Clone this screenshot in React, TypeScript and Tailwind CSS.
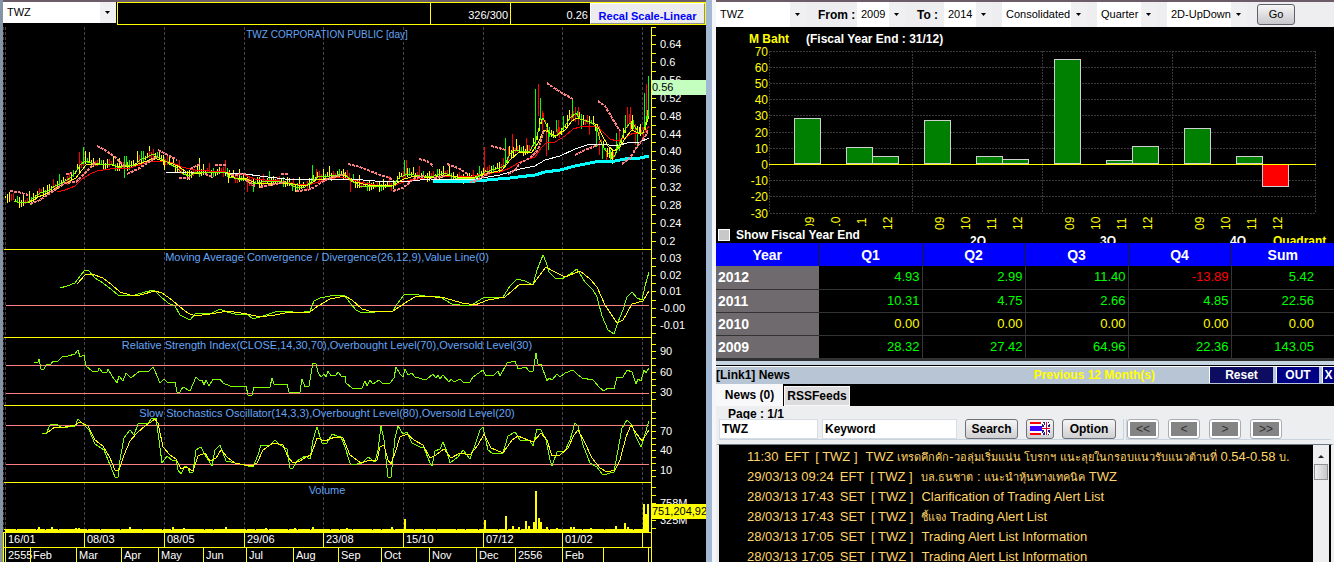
import { ReactNode } from 'react';

const GREEN = '#80ff00';
const YELLOW = '#ffff00';
const PINK = '#ff8080';

const fastLine =
  '14,201 20,203 28,202 35,197 40,193 48,191 55,186 62,183 70,178 76,172 80,165 85,161 92,163 105,165 113,164 118,168 125,166 135,165 140,160 147,157 153,154 158,157 165,161 170,164 177,168 183,174 190,176 196,172 205,172 213,173 225,172 230,177 238,179 245,180 252,184 262,182 275,181 288,183 295,187 305,187 312,181 318,177 330,176 345,174 350,180 360,186 375,187 392,186 400,177 408,174 420,176 430,177 445,173 455,178 465,179 475,178 485,172 500,168 505,165 510,154 515,150 520,151 530,151 536,140 540,124 543,118 546,124 549,133 555,137 560,132 565,126 570,118 576,113 580,119 586,121 592,123 597,128 600,140 605,150 610,155 614,157 618,148 622,138 626,128 630,123 634,125 638,132 642,134 645,128 648,110';
const slowLine =
  '20,202 30,202 38,197 48,193 58,187 68,182 76,178 82,170 86,165 98,164 112,165 118,167 130,166 142,163 154,158 160,160 170,163 178,166 186,172 196,174 205,172 228,173 235,178 245,178 255,183 270,183 288,183 298,185 308,185 316,180 330,178 345,175 354,182 368,185 392,186 404,179 415,176 432,178 445,175 458,177 472,178 486,174 502,170 510,160 518,153 532,152 538,143 544,130 550,133 556,136 565,130 572,121 577,118 590,122 597,125 602,135 608,146 614,151 620,147 626,137 632,130 638,133 643,133 649,116';
const redLine =
  '57,192 65,190 75,186 82,179 90,174 97,171 110,169 130,168 145,163 155,161 165,161 173,163 182,167 195,170 210,171 225,172 235,174 245,175 255,179 265,180 280,181 300,185 312,184 325,180 340,177 350,179 360,182 375,185 395,185 410,180 425,178 445,176 465,177 485,174 500,172 510,168 520,162 535,157 541,148 546,143 555,142 565,136 573,129 580,127 595,126 602,131 610,139 617,141 625,138 633,133 640,134 645,132 649,126';
const whiteLine =
  '165,172 225,173 245,174 260,176 285,179 300,180 330,179 350,179 375,181 400,182 430,179 470,180 500,175 520,169 535,166 545,160 560,156 575,149 590,144 600,144 617,146 630,142 640,142 649,138';
const cyanLine =
  '433,181 475,181 510,178 535,175 545,172 560,170 575,166 595,162 615,161 625,159 640,158 649,156';

const sarRuns = [
  '10,191 18,192 28,195',
  '30,204 40,200 50,193 65,183 76,182 85,173 95,163',
  '66,174 72,173',
  '97,146 105,150 115,157 125,167',
  '127,174 138,169 150,161 157,157',
  '158,150 168,155 177,160',
  '179,178 190,178',
  '190,169 200,164',
  '205,174 213,177',
  '215,165 227,165',
  '231,175 246,174',
  '246,180 255,186',
  '260,187 275,184 285,182',
  '281,174 288,174',
  '296,191 308,190 315,187 325,180 337,176 345,174',
  '348,164 360,167 375,173 392,179',
  '393,191 403,188 415,178 425,176',
  '419,159 427,161 433,166',
  '434,178 446,176',
  '447,164 458,168 468,174',
  '470,182 478,180 490,172',
  '491,146 506,150',
  '508,174 515,170 520,163 530,158 538,150 544,130',
  '547,83 560,92 573,99',
  '575,155 585,150 598,145',
  '598,101 605,106 612,118 620,131',
  '622,164 630,158 638,145 645,137 648,130',
];

// x, top, bottom, colour
const tallBars: [number, number, number, string][] = [
  [80, 152, 166, 'red'], [84, 147, 164, 'lime'], [86, 151, 164, 'yellow'], [125, 156, 178, 'lime'],
  [127, 156, 166, 'lime'], [138, 151, 162, 'yellow'], [142, 151, 160, 'lime'], [150, 151, 158, 'red'],
  [155, 156, 160, 'yellow'], [165, 160, 170, 'yellow'], [200, 158, 172, 'yellow'], [226, 160, 173, 'red'],
  [229, 173, 183, 'yellow'], [248, 178, 192, 'red'], [254, 182, 192, 'lime'], [293, 184, 191, 'lime'],
  [313, 165, 180, 'lime'], [317, 169, 180, 'red'], [351, 178, 192, 'red'], [405, 160, 176, 'lime'],
  [407, 160, 175, 'red'], [485, 147, 174, 'red'], [506, 138, 164, 'lime'], [509, 147, 160, 'red'],
  [513, 134, 151, 'red'], [517, 139, 151, 'yellow'], [527, 138, 151, 'red'], [536, 89, 150, 'lime'],
  [539, 84, 116, 'red'], [541, 98, 120, 'lime'], [543, 111, 130, 'red'], [547, 128, 156, 'red'],
  [549, 133, 150, 'lime'], [557, 120, 132, 'lime'], [559, 120, 133, 'red'], [564, 116, 128, 'lime'],
  [568, 115, 127, 'yellow'], [573, 98, 118, 'lime'], [576, 107, 122, 'red'], [579, 107, 125, 'red'],
  [582, 114, 129, 'lime'], [590, 124, 135, 'red'], [597, 128, 147, 'lime'], [600, 141, 155, 'red'],
  [603, 146, 159, 'lime'], [607, 150, 160, 'red'], [611, 150, 160, 'lime'], [613, 150, 164, 'yellow'],
  [617, 133, 150, 'lime'], [620, 129, 142, 'red'], [626, 115, 128, 'lime'], [628, 107, 124, 'red'],
  [631, 107, 130, 'red'], [633, 115, 130, 'yellow'], [636, 124, 145, 'red'], [638, 130, 147, 'lime'],
  [641, 124, 136, 'yellow'], [645, 93, 130, 'lime'], [647, 84, 120, 'red'], [649, 76, 116, 'lime'],
];

const macdFast =
  '60,288 67,286 75,283 80,276 85,270 89,271 95,278 103,283 112,290 118,295 124,296 135,295 145,292 154,290 160,296 168,303 175,306 180,315 190,320 196,313 210,314 220,309 227,312 235,314 247,314 253,319 263,316 275,312 287,311 298,313 310,311 314,301 320,298 330,296 340,295 345,296 350,303 356,310 362,313 375,312 393,311 397,304 404,295 413,294 425,296 440,297 452,304 460,305 470,306 483,298 503,297 510,286 517,279 525,281 533,285 537,270 543,255 546,262 549,272 555,278 562,279 570,274 577,269 585,282 593,290 597,297 602,316 608,330 614,334 618,322 623,310 627,297 632,292 637,298 642,300 645,286 649,272';
const macdSlow =
  '77,284 85,275 92,274 103,278 112,285 120,292 130,295 140,295 155,291 162,293 172,300 180,307 188,313 195,316 210,314 228,311 247,314 260,317 275,315 290,312 310,312 318,306 330,299 345,296 352,300 362,309 373,312 393,311 405,303 415,297 425,296 445,298 462,303 475,305 488,300 505,297 512,291 520,284 533,284 540,275 546,267 553,271 565,277 580,271 590,279 597,287 605,305 617,323 623,320 632,304 643,301 649,291';
const rsi =
  '34,362 38,362 39,359 41,369 44,369 46,365 51,364 53,361 58,361 62,357 68,356 75,354 78,350 80,357 84,355 86,366 92,371 98,371 99,368 103,373 107,372 108,369 112,376 117,383 119,376 123,381 126,373 131,378 137,373 140,371 149,371 153,367 155,371 160,383 164,379 167,382 175,382 177,392 180,392 183,387 190,391 196,377 199,380 202,380 204,385 206,380 209,386 213,379 220,379 223,383 230,386 246,386 248,395 252,395 254,387 270,387 272,378 274,384 287,384 289,392 300,392 302,379 305,387 309,386 311,374 313,363 316,364 318,372 321,377 324,374 326,377 328,371 331,376 336,375 338,372 342,377 345,376 346,383 352,388 362,388 365,381 367,386 370,380 373,384 379,380 382,383 390,383 394,378 396,367 400,374 403,377 405,369 408,375 412,373 415,377 426,380 433,374 436,378 438,375 440,379 443,375 449,382 451,379 454,382 460,379 463,382 470,382 473,377 483,370 486,376 494,375 498,371 500,376 507,363 515,361 518,369 526,367 529,371 533,371 536,353 538,364 541,364 547,381 549,378 552,380 557,374 560,377 565,373 573,370 577,374 582,378 593,380 600,388 604,391 608,388 614,389 617,377 623,377 627,370 632,372 636,384 638,379 641,381 644,370 646,373 649,368';
const stochFast =
  '42,433 46,434 50,425 57,424 62,428 75,426 78,419 83,424 89,430 95,444 104,450 108,460 115,477 118,477 120,460 124,438 130,430 134,435 138,424 148,423 152,418 156,418 159,440 162,463 167,456 173,461 176,460 178,470 181,474 185,466 188,468 190,473 193,472 196,450 201,447 205,455 212,466 215,450 220,445 226,461 240,464 248,466 253,467 258,455 261,445 270,445 275,440 280,445 287,449 290,468 293,468 297,461 305,456 310,459 313,440 317,427 322,443 327,443 332,434 337,436 341,437 345,447 350,463 352,465 362,463 368,457 375,462 378,450 381,426 384,440 388,477 391,477 395,438 398,426 403,434 407,432 412,443 420,447 424,448 430,463 432,466 435,451 440,449 443,442 447,452 450,463 458,457 463,450 470,459 475,445 480,430 483,427 488,450 492,453 503,453 508,436 515,432 520,440 530,441 533,446 537,429 541,430 546,440 550,460 552,466 557,452 565,451 570,440 575,423 578,426 583,445 590,463 597,467 603,475 614,472 618,450 622,428 627,420 632,425 636,437 641,447 645,434 649,421';
const stochSlow =
  '47,433 55,427 65,427 75,425 80,422 88,426 95,440 103,446 110,458 115,470 119,470 124,455 130,441 137,433 145,426 155,419 158,423 163,447 170,455 176,459 181,469 186,467 193,471 198,456 205,453 210,461 216,458 221,450 228,458 235,463 245,465 252,466 257,463 263,450 273,443 283,445 288,457 293,463 300,461 306,457 311,455 317,438 325,441 335,437 343,438 350,455 361,463 370,460 377,460 380,447 384,445 388,460 391,464 396,450 400,437 407,434 414,440 423,445 430,458 436,455 444,449 451,458 460,453 470,455 478,445 484,434 491,448 503,453 512,440 518,436 533,442 541,433 547,440 552,456 560,455 568,448 574,435 578,430 585,443 592,458 600,468 607,472 615,470 620,460 626,437 631,425 636,433 642,441 649,430';

const volumeBars: [number, number][] = [
  [38, 527], [51, 527], [75, 528], [78, 528], [129, 527], [172, 527], [183, 528], [225, 527], [265, 528], [294, 528],
  [312, 527], [346, 528], [391, 527], [404, 519], [484, 520], [505, 516], [512, 526], [518, 527], [525, 521], [528, 526],
  [533, 522], [535, 491], [538, 518], [540, 522], [546, 527], [556, 528], [570, 527], [573, 527], [590, 528], [615, 526],
  [624, 523], [627, 527], [643, 504], [645, 514], [647, 504],
];

const gridX = [5, 84, 164, 244, 323, 403, 483, 562, 642];
const dates = ['16/01', '08/03', '08/05', '29/06', '23/08', '15/10', '07/12', '01/02'];
const months: [number, string][] = [
  [5, '2555'], [30, 'Feb'], [76, 'Mar'], [121, 'Apr'], [158, 'May'], [203, 'Jun'], [246, 'Jul'], [293, 'Aug'],
  [338, 'Sep'], [381, 'Oct'], [429, 'Nov'], [476, 'Dec'], [515, '2556'], [562, 'Feb'], [603, ''], [648, ''],
];

const axisLabels: [number, string][] = [
  [44, '0.64'], [62, '0.6'], [80, '0.56'], [98, '0.52'], [116, '0.48'], [134, '0.44'], [151, '0.40'], [169, '0.36'],
  [187, '0.32'], [205, '0.28'], [223, '0.24'], [241, '0.2'],
  [258, '0.03'], [275, '0.02'], [291, '0.01'], [308, '-0.00'], [325, '-0.01'],
  [351, '90'], [372, '60'], [392, '30'],
  [431, '70'], [450, '40'], [470, '10'],
  [503, '758M'], [520, '325M'],
];
const minorTicks = [
  27, 35, 53, 71, 89, 107, 125, 142, 160, 178, 196, 214, 232, 266, 283, 300, 317, 333, 344, 358, 365, 379, 385, 399,
  412, 418, 425, 438, 444, 457, 463, 476, 487, 495, 512, 528,
];

const chartTitles: [number, string][] = [
  [261, 'Moving Average Convergence / Divergence(26,12,9),Value Line(0)'],
  [349, 'Relative Strength Index(CLOSE,14,30,70),Overbought Level(70),Oversold Level(30)'],
  [417, 'Slow Stochastics Oscillator(14,3,3),Overbought Level(80),Oversold Level(20)'],
  [494, 'Volume'],
];

const quarters = [
  { name: '1Q', values: [28.32, 0, 10.31, 4.93] },
  { name: '2Q', values: [27.42, 0, 4.75, 2.99] },
  { name: '3Q', values: [64.96, 0, 2.66, 11.4] },
  { name: '4Q', values: [22.36, 0, 4.85, -13.89] },
];
const quarterYears = ['09', '10', '11', '12'];

const results = [
  { year: '2012', cells: ['4.93', '2.99', '11.40', '-13.89', '5.42'] },
  { year: '2011', cells: ['10.31', '4.75', '2.66', '4.85', '22.56'] },
  { year: '2010', cells: ['0.00', '0.00', '0.00', '0.00', '0.00'] },
  { year: '2009', cells: ['28.32', '27.42', '64.96', '22.36', '143.05'] },
];

const news = [
  { time: '11:30', source: 'EFT', title: 'TWZ เทรดคึกคัก-วอลุ่มเริ่มแน่น โบรกฯ แนะลุยในกรอบแนวรับแนวต้านที่ 0.54-0.58 บ.' },
  { time: '29/03/13 09:24', source: 'EFT', title: 'บล.ธนชาต : แนะนำหุ้นทางเทคนิค TWZ' },
  { time: '28/03/13 17:43', source: 'SET', title: 'Clarification of Trading Alert List' },
  { time: '28/03/13 17:43', source: 'SET', title: 'ชี้แจง Trading Alert List' },
  { time: '28/03/13 17:05', source: 'SET', title: 'Trading Alert List Information' },
  { time: '28/03/13 17:05', source: 'SET', title: 'Trading Alert List Information' },
];

function priceAt(x: number) {
  const pts = fastLine.split(' ').map((p) => p.split(',').map(Number));
  for (let i = 1; i < pts.length; i++) {
    const [x0, y0] = pts[i - 1];
    const [x1, y1] = pts[i];
    if (x <= x1) return y0 + ((x - x0) / (x1 - x0)) * (y1 - y0);
  }
  return pts[pts.length - 1][1];
}

function Candles() {
  const colors = ['yellow', 'yellow', 'red', 'yellow', 'lime', 'red', 'yellow'];
  const bars: ReactNode[] = [];
  for (let x = 5, i = 0; x < 648; x += 2, i++) {
    const base = x < 14 ? 198 : Math.round(priceAt(x));
    const up = 2 + ((i * 7) % 5) * (i % 3 === 0 ? 2 : 1);
    const down = (i * 5) % 6;
    bars.push(<rect key={x} x={x} y={base - up} width="1" height={up + down} fill={colors[(i * 3) % 7]} />);
  }
  return (
    <g>
      {bars}
      {tallBars.map(([x, top, bottom, color]) => (
        <rect key={`t${x}`} x={x - 1} y={top} width="1" height={bottom - top} fill={color} />
      ))}
    </g>
  );
}

function Line({ points, color, width = 1 }: { points: string; color: string; width?: number }) {
  return <polyline points={points} fill="none" stroke={color} strokeWidth={width} />;
}

function TechnicalChart() {
  return (
    <svg
      viewBox="3 26 703 536"
      className="block w-full h-auto bg-black"
      fontFamily="'Liberation Sans', Arial, sans-serif"
      fontSize="11"
      shapeRendering="crispEdges"
      role="img"
      aria-label="TWZ technical chart"
    >
      {gridX.map((x) => (
        <line key={x} x1={x + 0.5} x2={x + 0.5} y1="27" y2="532" stroke="#4a404a" strokeDasharray="3 2" />
      ))}
      <line x1="3.5" x2="3.5" y1="27" y2="532" stroke="#4a404a" strokeDasharray="3 2" />

      <text x="327" y="38" textAnchor="middle" fill="#64a5f5" fontSize="10">TWZ CORPORATION PUBLIC [day]</text>
      {chartTitles.map(([y, text]) => (
        <text key={y} x="327" y={y} textAnchor="middle" fill="#64a5f5">{text}</text>
      ))}

      <Candles />
      <Line points={redLine} color="#ff0000" />
      <Line points={whiteLine} color="#ffffff" />
      <Line points={slowLine} color={YELLOW} />
      <Line points={fastLine} color={GREEN} />
      <Line points={cyanLine} color="#00ffff" width={3} />
      {sarRuns.map((run) => (
        <polyline key={run} points={run} fill="none" stroke={PINK} strokeWidth="2" strokeDasharray="3 1" />
      ))}

      <Line points="6,305.5 649,305.5" color={PINK} />
      <Line points={macdFast} color={GREEN} />
      <Line points={macdSlow} color={YELLOW} />

      <Line points="6,365.5 649,365.5" color={PINK} />
      <Line points="6,393.5 649,393.5" color={PINK} />
      <Line points={rsi} color={GREEN} />

      <Line points="6,425.5 649,425.5" color={PINK} />
      <Line points="6,464.5 649,464.5" color={PINK} />
      <Line points={stochFast} color={GREEN} />
      <Line points={stochSlow} color={YELLOW} />

      <line x1="5" x2="649" y1="531" y2="531" stroke={YELLOW} strokeWidth="2" />
      <line x1="4" x2="649" y1="529.5" y2="529.5" stroke={YELLOW} strokeDasharray="12 1 19 1 8 1" />
      {volumeBars.map(([x, y]) => (
        <rect key={x} x={x} y={y} width="2" height={532 - y} fill={YELLOW} />
      ))}

      {[249, 337, 405, 482, 532, 547].map((y) => (
        <line key={y} x1="4" x2="652" y1={y + 0.5} y2={y + 0.5} stroke={YELLOW} />
      ))}
      <line x1="651.5" x2="651.5" y1="27" y2="562" stroke={YELLOW} />
      <line x1="3.5" x2="3.5" y1="532" y2="562" stroke={YELLOW} />

      {gridX.map((x, i) => (
        <g key={x}>
          <line x1={x + 0.5} x2={x + 0.5} y1="532" y2="547" stroke={YELLOW} />
          <text x={x + 3} y="543" fill="white">{dates[i]}</text>
        </g>
      ))}
      {months.map(([x, label]) => (
        <g key={x}>
          <line x1={x + 0.5} x2={x + 0.5} y1="547" y2="562" stroke={YELLOW} />
          <text x={x + 3} y="559" fill="white">{label}</text>
        </g>
      ))}

      {minorTicks.map((y) => (
        <line key={y} x1="652" x2="656" y1={y + 0.5} y2={y + 0.5} stroke={YELLOW} />
      ))}
      {axisLabels.map(([y, label]) => (
        <g key={y}>
          <line x1="652" x2="656" y1={y + 0.5} y2={y + 0.5} stroke={YELLOW} />
          <text x="660" y={y + 4} fill="white">{label}</text>
        </g>
      ))}

      <rect x="652" y="80" width="54" height="15" fill="#c4ffc0" />
      <text x="652" y="91" fill="black">0.56</text>
      <rect x="652" y="504" width="54" height="15" fill={YELLOW} />
      <text x="652" y="515" fill="black">751,204,92</text>
    </svg>
  );
}

function QuarterChart() {
  const yOf = (v: number) => Math.round(164 - v * 1.62);
  return (
    <svg
      viewBox="716 27 618 216"
      className="block w-full h-auto bg-black"
      fontFamily="'Liberation Sans', Arial, sans-serif"
      fontSize="12"
      shapeRendering="crispEdges"
      role="img"
      aria-label="Net profit by quarter"
    >
      <text x="749" y="43" fill={YELLOW} fontWeight="bold">M Baht</text>
      <text x="806" y="43" fill="white" fontWeight="bold">(Fiscal Year End : 31/12)</text>
      {[70, 60, 50, 40, 30, 20, 10, 0, -10, -20, -30].map((v) => (
        <g key={v}>
          <line x1="770" x2="1316" y1={yOf(v) + 0.5} y2={yOf(v) + 0.5} stroke="#3c383c" strokeDasharray="2 1" />
          <text x="768" y={yOf(v) + 5} textAnchor="end" fill={YELLOW}>{v}</text>
        </g>
      ))}
      {[769, 912, 1042, 1172, 1315].map((x) => (
        <line key={x} x1={x + 0.5} x2={x + 0.5} y1="51" y2="213" stroke="#3c383c" strokeDasharray="2 1" />
      ))}
      {quarters.map((q, i) =>
        q.values.map((v, j) => {
          const x = 794 + i * 130 + j * 26;
          const top = Math.min(yOf(v), 164);
          return (
            <g key={q.name + j}>
              {v !== 0 && (
                <rect
                  x={x + 0.5}
                  y={top + 0.5}
                  width="26"
                  height={Math.max(Math.abs(yOf(v) - 164) - 1, 1)}
                  fill={v < 0 ? '#ff0000' : '#008000'}
                  stroke="#d0d0d0"
                />
              )}
              <text transform={`translate(${x + 20} 230) rotate(-90)`} fill={YELLOW}>{quarterYears[j]}</text>
            </g>
          );
        }),
      )}
      <line x1="769" x2="1316" y1="164.5" y2="164.5" stroke={YELLOW} />
      {quarters.map((q, i) => (
        <text key={q.name} x={848 + i * 130} y="245" textAnchor="middle" fill="white" fontWeight="bold">{q.name}</text>
      ))}
      <text x="1273" y="245" fill={YELLOW} fontWeight="bold">Quadrant</text>
    </svg>
  );
}

function Picker({ label, value, className }: { label: string; value: string; className: string }) {
  return (
    <span className={`relative flex h-full shrink-0 items-center ${className}`}>
      <select
        aria-label={label}
        defaultValue={value}
        className="h-full w-full appearance-none bg-white bg-[linear-gradient(#f0f0f2,#f0f0f2)] bg-[length:16px_100%] bg-right bg-no-repeat pl-1 text-[11px] font-normal text-black outline-none"
      >
        <option>{value}</option>
      </select>
      <svg viewBox="0 0 5 3" className="pointer-events-none absolute right-1.5 h-[3px] w-[5px]">
        <path d="M0 0h5L2.5 3z" fill="black" />
      </svg>
    </span>
  );
}

function Flags() {
  return (
    <svg viewBox="0 0 20 13" className="h-[13px] w-5" shapeRendering="crispEdges">
      <path d="M0 0h20v13H0z" fill="white" />
      <path d="M0 0h11v2H0zM0 11h11v2H0z" fill="#ff0000" />
      <path d="M12 0h8v13h-8z" fill="#202080" />
      <path d="M12 0l8 13M20 0l-8 13" stroke="white" strokeWidth="1" />
      <path d="M12 6.500h8M16.500 0v13" stroke="white" strokeWidth="3" />
      <path d="M12 6.500h8M16.500 0v13" stroke="#e00030" strokeWidth="1" />
      <path d="M0 4h12v5H0z" fill="#4000ff" />
    </svg>
  );
}

// Thai runs are set smaller than the latin text round them
function Headline({ text }: { text: string }) {
  return (
    <span className="whitespace-pre">
      {text.split(/([\u0E00-\u0E7F]+)/).map((part, i) => (
        <span key={i} className={i % 2 ? 'text-[11px]' : ''}>{part}</span>
      ))}
    </span>
  );
}

function cellColor(value: string) {
  if (value.startsWith('-')) return 'text-[#ff0000]';
  return value === '0.00' ? 'text-[#ffff00]' : 'text-[#00ff00]';
}

const pushButton =
  'flex h-5 items-center justify-center rounded-[3px] border border-[#707078] bg-linear-to-b from-[#f6f6f6] to-[#cfcfd2] text-xs font-bold text-black';
const navButton =
  'flex h-5 w-8 items-center justify-center rounded-[3px] border border-[#a8acb4] bg-white p-0.5';

export default function App() {
  return (
    <div className="grid h-screen grid-cols-[706fr_628fr] overflow-hidden bg-black font-['Liberation_Sans',Arial,sans-serif] text-black">
      <section className="flex min-w-0 flex-col border-l-[3px] border-l-[#8494a4]">
        <div className="flex h-[26px] shrink-0 items-start border-t-2 border-t-[#6c5c6a]">
          <div className="h-[21px]">
            <Picker label="Symbol" value="TWZ" className="w-[113px]" />
          </div>
          <div className="ml-px flex h-[23px] min-w-0 flex-1 border border-[#ffff00] text-right text-[11px] leading-[24px] text-white">
            <div className="flex-1" />
            <div className="w-20 border-l border-[#ffff00] pr-0.5">326/300</div>
            <div className="w-20 border-l border-[#ffff00] pr-0.5">0.26</div>
            <button className="w-[115px] border border-white border-r-[#909090] border-b-[#909090] bg-[#ececee] text-[11px] font-bold text-[#0000ff]">
              Recal Scale-Linear
            </button>
          </div>
        </div>
        <TechnicalChart />
      </section>

      <div className="flex min-h-0 min-w-0 border-l-6 border-l-[#a3b9d3] bg-[#f4f6fa] pl-1">
        <div className="flex min-w-0 flex-1 flex-col border-t-2 border-t-[#6c5c6a]">
          <div className="flex h-[25px] shrink-0 items-center bg-[#eeeef0] text-xs font-bold">
            <Picker label="Symbol" value="TWZ" className="w-[90px]" />
            <span className="ml-3 w-[39px] whitespace-nowrap">From :</span>
            <Picker label="From year" value="2009" className="w-12" />
            <span className="ml-3 w-[26px] whitespace-nowrap">To :</span>
            <Picker label="To year" value="2014" className="ml-px w-12" />
            <Picker label="Statement" value="Consolidated" className="ml-2.5 w-[85px]" />
            <Picker label="Period" value="Quarter" className="ml-2.5 w-[60px]" />
            <Picker label="Chart type" value="2D-UpDown" className="ml-2.5 w-20" />
            <button className="ml-2.5 h-[21px] w-[38px] rounded-[3px] border border-[#606068] bg-linear-to-b from-[#f6f6f6] to-[#c8c8cc] text-[11px] font-normal">
              Go
            </button>
          </div>

          <div className="relative">
            <QuarterChart />
            <label className="absolute bottom-0 left-0 flex h-[17px] items-center gap-1.5 bg-black pr-2 text-xs font-bold text-white">
              <input type="checkbox" className="ml-0.5 size-3 appearance-none border border-white bg-[#c8c8c8]" />
              Show Fiscal Year End
            </label>
          </div>

          <table className="w-full shrink-0 table-fixed border-collapse bg-black text-sm">
            <thead>
              <tr className="h-[23px] bg-[#0000ff] text-white">
                {['Year', 'Q1', 'Q2', 'Q3', 'Q4', 'Sum'].map((h) => (
                  <th key={h} className="border-r border-[#202020] p-0 leading-[22px] last:border-r-0">{h}</th>
                ))}
              </tr>
            </thead>
            <tbody>
              {results.map((row) => (
                <tr key={row.year} className="h-[23px] border-b border-[#333333]">
                  <th className="bg-[#6e6a6e] p-0 pl-0.5 text-left leading-[22px] text-white">{row.year}</th>
                  {row.cells.map((cell, i) => (
                    <td
                      key={i}
                      className={`border-r border-[#333333] p-0 pr-0.5 text-right text-[13px] leading-[22px] last:border-r-0 last:pr-5 ${cellColor(cell)}`}
                    >
                      {cell}
                    </td>
                  ))}
                </tr>
              ))}
            </tbody>
          </table>

          <div className="h-[7px] shrink-0 border-t-2 border-b border-t-[#303030] border-b-black bg-[#c4d4e0]" />
          <header className="flex h-[18px] shrink-0 items-center border-t border-t-white bg-[#b8c5d4] text-xs font-bold whitespace-nowrap">
            <h2>[Link1] News</h2>
            <span className="ml-auto mr-[54px] text-[#ffff00]">Previous 12 Month(s)</span>
            <div className="flex h-4 gap-[3px] overflow-hidden text-white">
              <button className="w-16 border-l border-white bg-[#0c0c60]">Reset</button>
              <button className="w-[43px] border-l border-white bg-[#000084]">OUT</button>
              <button className="w-3 border-l border-white bg-[#000084]">X</button>
            </div>
          </header>

          <div className="flex h-[22px] shrink-0 items-end bg-black text-xs font-bold">
            <button className="h-[22px] w-[67px] bg-[#f8f8fa]">News (0)</button>
            <button className="ml-px h-5 w-[66px] border border-[#f8f8fa] bg-[#dcdcde]">RSSFeeds</button>
          </div>

          <div className="relative flex h-[38px] shrink-0 items-end gap-0.5 bg-[#eceef0] px-[3px] pb-1">
            <span className="absolute left-2.5 top-0.5 z-0 bg-[#eceef0] px-0.5 text-xs leading-3 font-bold">Page : 1/1</span>
            <div className="flex items-end border-r border-b border-[#c8d4e0] pr-[7px]">
              <input
                aria-label="Symbol"
                defaultValue="TWZ"
                className="relative z-10 h-5 w-[99px] border border-[#d8dce4] bg-white pl-0.5 text-xs font-bold outline-none"
              />
              <input
                aria-label="Keyword"
                defaultValue="Keyword"
                className="relative z-10 ml-1 h-5 w-[135px] border border-[#d8dce4] bg-white pl-0.5 text-xs font-bold outline-none"
              />
              <button className={`ml-2 w-[53px] ${pushButton}`}>Search</button>
              <button aria-label="Language" className={`ml-2 w-7 ${pushButton}`}>
                <Flags />
              </button>
              <button className={`ml-2 w-[54px] ${pushButton}`}>Option</button>
            </div>
            <div className="flex flex-1 items-end gap-[9px] border-b border-l border-[#c8d4e0]">
              {['<<', '<', '>', '>>'].map((arrow) => (
                <button key={arrow} className={navButton}>
                  <span className="flex h-full w-full items-center justify-center bg-[#848484] text-xs text-[#303030]">
                    {arrow}
                  </span>
                </button>
              ))}
            </div>
          </div>

          <div className="flex min-h-0 flex-1 border-x-[3px] border-t border-x-[#eceef0] border-t-[#707888] bg-black">
            <ul className="min-w-0 flex-1 overflow-hidden pt-0.5 text-[13px] text-[#ffd46a]">
              {news.map((item, i) => (
                <li key={i} className="h-5 pl-7 leading-5 whitespace-nowrap">
                  <a href="#news" className="flex">
                    <span>{item.time}</span>
                    <span className="ml-1.5">{item.source}</span>
                    <span className="ml-1.5">[ TWZ ]</span>
                    <span className="ml-2"><Headline text={item.title} /></span>
                  </a>
                </li>
              ))}
            </ul>
            <div className="mr-0.5 flex w-4 flex-col items-center bg-[#eeeef0]">
              <svg viewBox="0 0 6 3" className="mt-2.5 h-[3px] w-1.5">
                <path d="M3 0l3 3H0z" fill="#202020" />
              </svg>
              <div className="mt-1.5 h-4 w-3.5 border border-[#909090] bg-linear-to-r from-[#f0f0f0] to-[#c8c8cc]" />
            </div>
          </div>
        </div>
      </div>
    </div>
  );
}
